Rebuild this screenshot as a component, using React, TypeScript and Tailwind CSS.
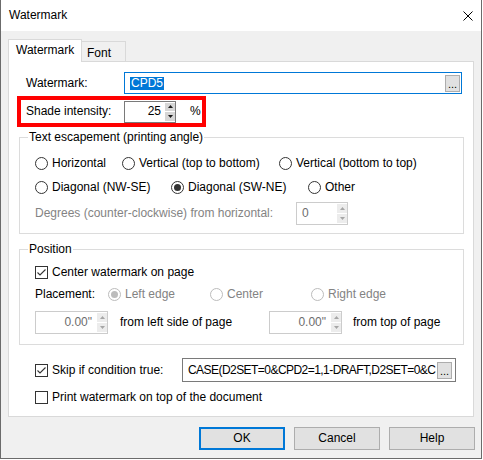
import React from "react";

const BORDER_IN = "border-[#7a7a7a]";

function Radio({ checked = false, disabled = false }: { checked?: boolean; disabled?: boolean }) {
  return (
    <span
      className={
        disabled
          ? "w-[13px] h-[13px] rounded-full border border-[#bcbcbc] bg-white flex items-center justify-center shrink-0"
          : "w-[13px] h-[13px] rounded-full border border-[#333333] bg-white flex items-center justify-center shrink-0"
      }
    >
      {checked ? (
        <span className={disabled ? "w-[7px] h-[7px] rounded-full bg-[#bcbcbc]" : "w-[7px] h-[7px] rounded-full bg-[#333333]"} />
      ) : null}
    </span>
  );
}

function Check({ checked = false }: { checked?: boolean }) {
  return (
    <span className="w-[13px] h-[13px] border border-[#333333] bg-white flex items-center justify-center shrink-0">
      {checked ? (
        <svg width="11" height="11" viewBox="0 0 11 11">
          <path d="M1.5 5.5 L4 8 L9.5 2.5" fill="none" stroke="#333333" strokeWidth="1.1" />
        </svg>
      ) : null}
    </span>
  );
}

function Spin({ disabled = false }: { disabled?: boolean }) {
  const fill = disabled ? "#a6a6a6" : "#1a1a1a";
  return (
    <div className="w-[10px] h-full flex flex-col gap-px py-px">
      <div className={disabled ? "flex-1 bg-[#ececec] flex items-center justify-center" : "flex-1 bg-[#d6d6d6] flex items-center justify-center"}>
        <svg width="5" height="3" viewBox="0 0 5 3">
          <polygon points="2.5,0 5,3 0,3" fill={fill} />
        </svg>
      </div>
      <div className={disabled ? "flex-1 bg-[#ececec] flex items-center justify-center" : "flex-1 bg-[#d6d6d6] flex items-center justify-center"}>
        <svg width="5" height="3" viewBox="0 0 5 3">
          <polygon points="0,0 5,0 2.5,3" fill={fill} />
        </svg>
      </div>
    </div>
  );
}

function Dots() {
  return (
    <div className="w-[15px] h-[17px] bg-[#e1e1e1] border border-[#adadad] flex items-end justify-center pb-[3px] text-[11px] leading-[8px] shrink-0">
      ...
    </div>
  );
}

export default function App() {
  return (
    <div className="w-[482px] h-[459px] bg-[#f0f0f0] border-l border-r border-b border-[#6b6b6b] flex flex-col text-[12px] leading-[15px] text-black font-['Liberation_Sans',Arial,sans-serif] overflow-hidden">
      {/* Title bar */}
      <div className="h-[31px] bg-white flex items-center justify-between pl-[8px] pr-[8px] shrink-0">
        <span className="text-[12px]">Watermark</span>
        <svg width="10" height="10" viewBox="0 0 10 10">
          <path d="M0.5 0.5 L9.5 9.5 M9.5 0.5 L0.5 9.5" stroke="#000" strokeWidth="1" />
        </svg>
      </div>

      <div className="pl-[7px] pt-[8px]">
        {/* Tabs */}
        <div className="flex items-start h-[22px]">
          <div className="relative z-10 h-[23px] w-[74px] bg-white border-t border-l border-r border-[#d9d9d9] pl-[7px] pt-[3px]">
            Watermark
          </div>
          <div className="mt-[2px] h-[20px] w-[44px] border-t border-r border-[#d9d9d9] pl-[5px] pt-[4px]">Font</div>
        </div>

        {/* Panel */}
        <div className="w-[466px] h-[356px] bg-white border border-[#d9d9d9] flex flex-col">
          <div className="mt-[10px] pl-[17px] flex items-center">
            <div className="w-[98px]">Watermark:</div>
            <div className="w-[338px] h-[22px] border border-[#0078d7] flex items-center justify-between pl-[5px] pr-px">
              <span className="bg-[#0078d7] text-white leading-[13px] px-px">CPD5</span>
              <Dots />
            </div>
          </div>

          <div className="mt-[2px] ml-[8px] w-[189px] h-[31px] border-4 border-[#ff0000] flex items-center pl-[5px]">
            <div className="w-[98px]">Shade intensity:</div>
            <div className={`w-[52px] h-[22px] border ${BORDER_IN} flex items-stretch`}>
              <div className="flex-1 text-right pr-[4px] flex items-center justify-end">25</div>
              <Spin />
            </div>
            <div className="ml-[14px]">%</div>
          </div>

          {/* Text escapement group */}
          <fieldset className="mt-[3px] ml-[10px] w-[445px] border border-[#dcdcdc] pl-[15px] pb-[8px]">
            <legend className="-ml-[7px] px-px leading-[14px]">Text escapement (printing angle)</legend>
            <div className="mt-[11px] h-[16px] flex items-center">
              <div className="w-[87px] flex items-center gap-[4px]"><Radio />Horizontal</div>
              <div className="w-[157px] flex items-center gap-[4px]"><Radio />Vertical (top to bottom)</div>
              <div className="flex items-center gap-[4px]"><Radio />Vertical (bottom to top)</div>
            </div>
            <div className="mt-[8px] h-[16px] flex items-center">
              <div className="w-[136px] flex items-center gap-[4px]"><Radio />Diagonal (NW-SE)</div>
              <div className="w-[137px] flex items-center gap-[4px]"><Radio checked />Diagonal (SW-NE)</div>
              <div className="flex items-center gap-[4px]"><Radio />Other</div>
            </div>
            <div className="mt-[7px] h-[23px] flex items-center">
              <div className="w-[261px] text-[#838383]">Degrees (counter-clockwise) from horizontal:</div>
              <div className="w-[52px] h-[23px] border border-[#cccccc] flex items-stretch">
                <div className="flex-1 pl-[5px] flex items-center text-[#6d6d6d]">0</div>
                <Spin disabled />
              </div>
            </div>
          </fieldset>

          {/* Position group */}
          <fieldset className="mt-[8px] ml-[10px] w-[445px] border border-[#dcdcdc] pl-[15px] pb-[10px]">
            <legend className="-ml-[7px] px-px leading-[14px]">Position</legend>
            <div className="mt-[8px] h-[16px] flex items-center gap-[4px]">
              <Check checked />
              Center watermark on page
            </div>
            <div className="mt-[6px] h-[16px] flex items-center">
              <div className="w-[73px]">Placement:</div>
              <div className="w-[102px] flex items-center gap-[4px] text-[#838383]"><Radio checked disabled />Left edge</div>
              <div className="w-[101px] flex items-center gap-[4px] text-[#838383]"><Radio disabled />Center</div>
              <div className="flex items-center gap-[4px] text-[#838383]"><Radio disabled />Right edge</div>
            </div>
            <div className="mt-[9px] h-[23px] flex items-center">
              <div className="w-[234px] flex items-center">
                <div className="w-[73px] h-[23px] border border-[#cccccc] flex items-stretch">
                  <div className="flex-1 pr-[5px] flex items-center justify-end text-[#6d6d6d]">0.00"</div>
                  <Spin disabled />
                </div>
                <div className="ml-[12px]">from left side of page</div>
              </div>
              <div className="w-[73px] h-[23px] border border-[#cccccc] flex items-stretch">
                <div className="flex-1 pr-[5px] flex items-center justify-end text-[#6d6d6d]">0.00"</div>
                <Spin disabled />
              </div>
              <div className="ml-[11px]">from top of page</div>
            </div>
          </fieldset>

          <div className="mt-[13px] pl-[26px] flex items-center">
            <div className="w-[147px] flex items-center gap-[4px]">
              <Check checked />
              Skip if condition true:
            </div>
            <div className={`w-[274px] h-[24px] border ${BORDER_IN} flex items-center justify-between pl-[5px] pr-[3px]`}>
              <div className="whitespace-nowrap tracking-[-0.55px]">CASE(D2SET=0&amp;CPD2=1,1-DRAFT,D2SET=0&amp;C</div>
              <Dots />
            </div>
          </div>

          <div className="mt-[7px] pl-[26px] h-[16px] flex items-center gap-[4px]">
            <Check />
            Print watermark on top of the document
          </div>
        </div>
      </div>

      {/* Buttons */}
      <div className="mt-[10px] pr-[6px] flex justify-end gap-[9px]">
        <div className="w-[86px] h-[23px] bg-[#e1e1e1] border-2 border-[#0078d7] flex items-center justify-center">OK</div>
        <div className="w-[86px] h-[23px] bg-[#e1e1e1] border border-[#adadad] flex items-center justify-center">Cancel</div>
        <div className="w-[86px] h-[23px] bg-[#e1e1e1] border border-[#adadad] flex items-center justify-center">Help</div>
      </div>
    </div>
  );
}
